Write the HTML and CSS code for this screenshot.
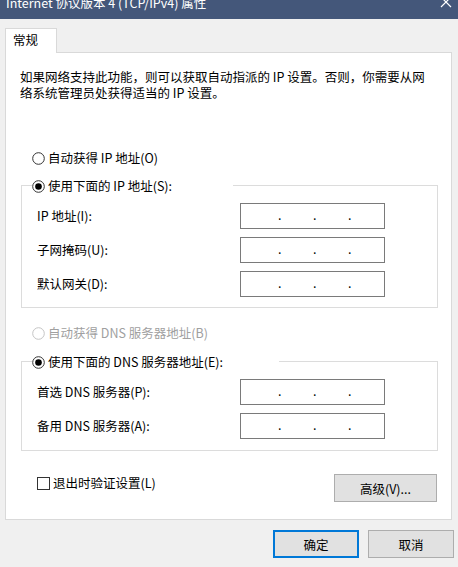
FILE: index.html
```html
<!DOCTYPE html>
<html lang="zh-CN">
<head>
<meta charset="utf-8">
<title>Internet 协议版本 4 (TCP/IPv4) 属性</title>
<link rel="stylesheet" href="styles.css">
</head>
<body>
<div class="window">
  <div class="titlebar">
    <span class="title">Internet 协议版本 4 (TCP/IPv4) 属性</span>
    <svg class="close" width="12" height="12" viewBox="0 0 12 12"><path d="M1 1 L11 11 M11 1 L1 11" stroke="#fff" stroke-width="1.2" fill="none"/></svg>
  </div>
  <div class="body">
    <div class="tabs"><div class="tab">常规</div></div>
    <div class="panel">
      <p class="intro">如果网络支持此功能，则可以获取自动指派的 IP 设置。否则，你需要从网<br>络系统管理员处获得适当的 IP 设置。</p>

      <div class="radio r-auto-ip">
        <svg class="rb" width="13" height="13" viewBox="0 0 13 13"><circle cx="6.5" cy="6.5" r="5.8" fill="#fff" stroke="#333" stroke-width="1"/></svg>
        <span>自动获得 IP 地址(O)</span>
      </div>

      <div class="group g-ip">
        <div class="radio head head-ip">
          <svg class="rb" width="13" height="13" viewBox="0 0 13 13"><circle cx="6.5" cy="6.5" r="5.8" fill="#fff" stroke="#333" stroke-width="1"/><circle cx="6.5" cy="6.5" r="3.3" fill="#000"/></svg>
          <span>使用下面的 IP 地址(S):</span>
        </div>
        <div class="fields">
          <label>IP 地址(I):</label>
          <div class="ip"><span>.</span><span>.</span><span>.</span></div>
          <label>子网掩码(U):</label>
          <div class="ip"><span>.</span><span>.</span><span>.</span></div>
          <label>默认网关(D):</label>
          <div class="ip"><span>.</span><span>.</span><span>.</span></div>
        </div>
      </div>

      <div class="radio disabled r-auto-dns">
        <svg class="rb" width="13" height="13" viewBox="0 0 13 13"><circle cx="6.5" cy="6.5" r="5.8" fill="#fff" stroke="#c4c4c4" stroke-width="1"/></svg>
        <span>自动获得 DNS 服务器地址(B)</span>
      </div>

      <div class="group g-dns">
        <div class="radio head head-dns">
          <svg class="rb" width="13" height="13" viewBox="0 0 13 13"><circle cx="6.5" cy="6.5" r="5.8" fill="#fff" stroke="#333" stroke-width="1"/><circle cx="6.5" cy="6.5" r="3.3" fill="#000"/></svg>
          <span>使用下面的 DNS 服务器地址(E):</span>
        </div>
        <div class="fields">
          <label>首选 DNS 服务器(P):</label>
          <div class="ip"><span>.</span><span>.</span><span>.</span></div>
          <label>备用 DNS 服务器(A):</label>
          <div class="ip"><span>.</span><span>.</span><span>.</span></div>
        </div>
      </div>

      <div class="bottom-row">
        <div class="check">
          <span class="cb"></span>
          <span>退出时验证设置(L)</span>
        </div>
        <button class="btn adv">高级(V)...</button>
      </div>
    </div>
    <div class="footer">
      <button class="btn ok">确定</button>
      <button class="btn cancel">取消</button>
    </div>
  </div>
</div>
</body>
</html>
```
FILE: styles.css
```css
* { box-sizing: border-box; }
html, body {
  margin: 0;
  padding: 0;
  background: #f0f0f0;
}
body {
  font-family: "Noto Sans CJK SC", "Noto Sans", sans-serif;
  font-size: 12.5px;
  color: #000;
}
.window {
  width: 458px;
  height: 567px;
  overflow: hidden;
}
.titlebar {
  height: 19px;
  background: #44577a;
  display: flex;
  justify-content: space-between;
  overflow: hidden;
  padding: 0 6px 0 6px;
}
.title {
  color: #fff;
  line-height: 16px;
  margin-top: -5px;
  white-space: nowrap;
}
.close {
  margin-top: -4px;
  margin-right: 0;
}
.body {
  padding: 9px 0 0 5px;
}
.tabs {
  display: flex;
  height: 24px;
}
.tab {
  width: 52px;
  height: 25px;
  background: #fff;
  border: 1px solid #d9d9d9;
  border-bottom: none;
  position: relative;
  z-index: 1;
  padding-left: 7px;
  line-height: 22px;
}
.panel {
  width: 447px;
  height: 468px;
  background: #fff;
  border: 1px solid #d9d9d9;
  padding: 16px 13px 0 15px;
}
.intro {
  margin: 0 0 0 -1px;
  line-height: 16px;
  white-space: nowrap;
}
.radio {
  display: flex;
  align-items: center;
  height: 16px;
  line-height: 16px;
  white-space: nowrap;
}
.radio .rb {
  flex: none;
  margin-right: 3px;
}
.r-auto-ip {
  margin-top: 49px;
  padding-left: 11px;
}
.disabled {
  color: #a0a0a0;
}
.group {
  border: 1px solid #dcdcdc;
  width: 417px;
}
.g-ip {
  margin-top: 19px;
  padding-bottom: 10px;
}
.head {
  margin-top: -8px;
  margin-left: 10px;
  background: #fff;
}
.head-ip { width: 201px; }
.head-dns { width: 247px; }
.fields {
  display: grid;
  grid-template-columns: 203px 145px;
  row-gap: 8px;
  margin-top: 9px;
  padding-left: 15px;
  align-items: center;
}
.fields label {
  line-height: 16px;
  white-space: nowrap;
}
.ip {
  height: 26px;
  border: 1px solid #7a7a7a;
  display: flex;
  padding-left: 37px;
  line-height: 22px;
}
.ip span {
  width: 35px;
}
.r-auto-dns {
  margin-top: 17px;
  padding-left: 11px;
}
.g-dns {
  margin-top: 20px;
  padding-bottom: 11px;
}
.bottom-row {
  display: flex;
  justify-content: space-between;
  align-items: flex-start;
  margin-top: 23px;
  padding-left: 16px;
  padding-right: 1px;
}
.check {
  display: flex;
  align-items: center;
  height: 16px;
  margin-top: 1px;
  line-height: 16px;
}
.cb {
  width: 13px;
  height: 13px;
  border: 1px solid #333;
  background: #fff;
  margin-right: 3px;
}
.btn {
  font-family: "Noto Sans CJK SC", "Noto Sans", sans-serif;
  font-size: 12.5px;
  color: #000;
  background: #e1e1e1;
  border: 1px solid #adadad;
  height: 28px;
  padding: 0;
  margin: 0;
}
.adv {
  width: 103px;
}
.footer {
  display: flex;
  justify-content: flex-end;
  gap: 9px;
  margin-top: 10px;
  padding-right: 4px;
}
.ok, .cancel {
  width: 86px;
}
.ok {
  border: 2px solid #0078d7;
}
```
